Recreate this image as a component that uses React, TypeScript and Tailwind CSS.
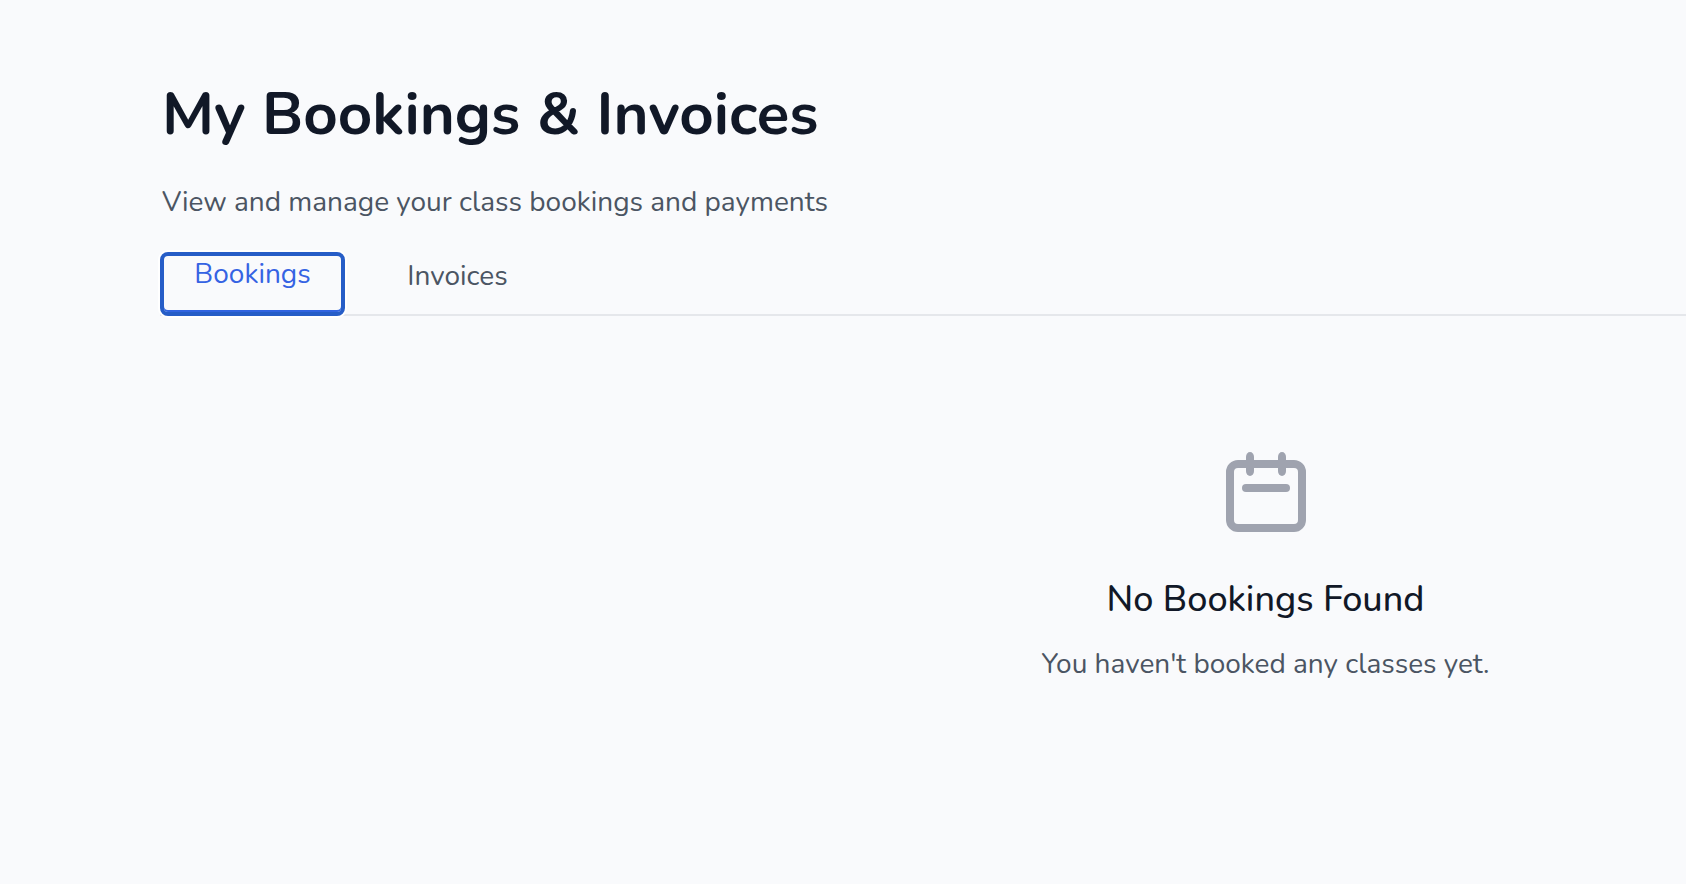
import React, { useState } from 'react';
import clsx from 'clsx';

const TABS = [
  { label: 'Bookings', value: 'bookings' },
  { label: 'Invoices', value: 'invoices' },
];

const EMPTY_CONTENT: Record<string, { title: string; description: string }> = {
  bookings: {
    title: 'No Bookings Found',
    description: "You haven't booked any classes yet.",
  },
  invoices: {
    title: 'No Invoices Found',
    description: "You don't have any invoices yet.",
  },
};

const CalendarIcon = () => (
  <svg
    className="size-24 text-[#9fa3af]"
    viewBox="0 0 96 96"
    fill="none"
    aria-hidden="true"
  >
    <rect
      x="12"
      y="20"
      width="72"
      height="64"
      rx="8"
      stroke="currentColor"
      strokeWidth={8}
    />
    <rect x="28" y="8" width="8" height="24" rx="4" ry="5" fill="currentColor" />
    <rect x="60" y="8" width="8" height="24" rx="4" ry="5" fill="currentColor" />
    <path
      d="M28 44h40"
      stroke="currentColor"
      strokeWidth={8}
      strokeLinecap="round"
    />
  </svg>
);

export default function App() {
  const [activeTab, setActiveTab] = useState('bookings');
  const { title, description } = EMPTY_CONTENT[activeTab];

  return (
    <main className="min-h-screen overflow-hidden bg-[#f9fafc] pt-[78px] font-['Nunito','Lato',sans-serif] text-[28px] leading-10 text-[#4b5563]">
      {/* Header */}
      <header className="flex flex-col gap-8 pl-[162px]">
        <h1 className="text-[60px] leading-[72px] font-bold text-[#111827]">
          My Bookings &amp; Invoices
        </h1>
        <p>View and manage your class bookings and payments</p>
      </header>

      {/* Tabs */}
      <div
        role="tablist"
        className="mt-[30px] ml-40 flex h-16 gap-5 leading-9 shadow-[inset_0_-2px_0_#e5e7eb]"
      >
        {TABS.map((tab) => (
          <button
            key={tab.value}
            type="button"
            role="tab"
            aria-selected={activeTab === tab.value}
            onClick={() => setActiveTab(tab.value)}
            className={clsx(
              'flex w-[185px] cursor-pointer justify-center rounded-lg outline-none',
              activeTab === tab.value
                ? 'border-4 border-[#265dc7] text-[#3563e3] shadow-[inset_0_-2px_0_#3164e0,0_0_0_2px_#ffffff]'
                : 'pt-1.5',
            )}
          >
            {tab.label}
          </button>
        ))}
      </div>

      {/* Empty state */}
      <div className="grid grid-cols-2 gap-1 pt-32">
        <section className="col-start-2 flex flex-col items-center text-center">
          <CalendarIcon />
          <h2 className="mt-8 text-[36px] leading-[56px] font-medium text-[#111827]">
            {title}
          </h2>
          <p className="mt-4">{description}</p>
        </section>
      </div>
    </main>
  );
}
